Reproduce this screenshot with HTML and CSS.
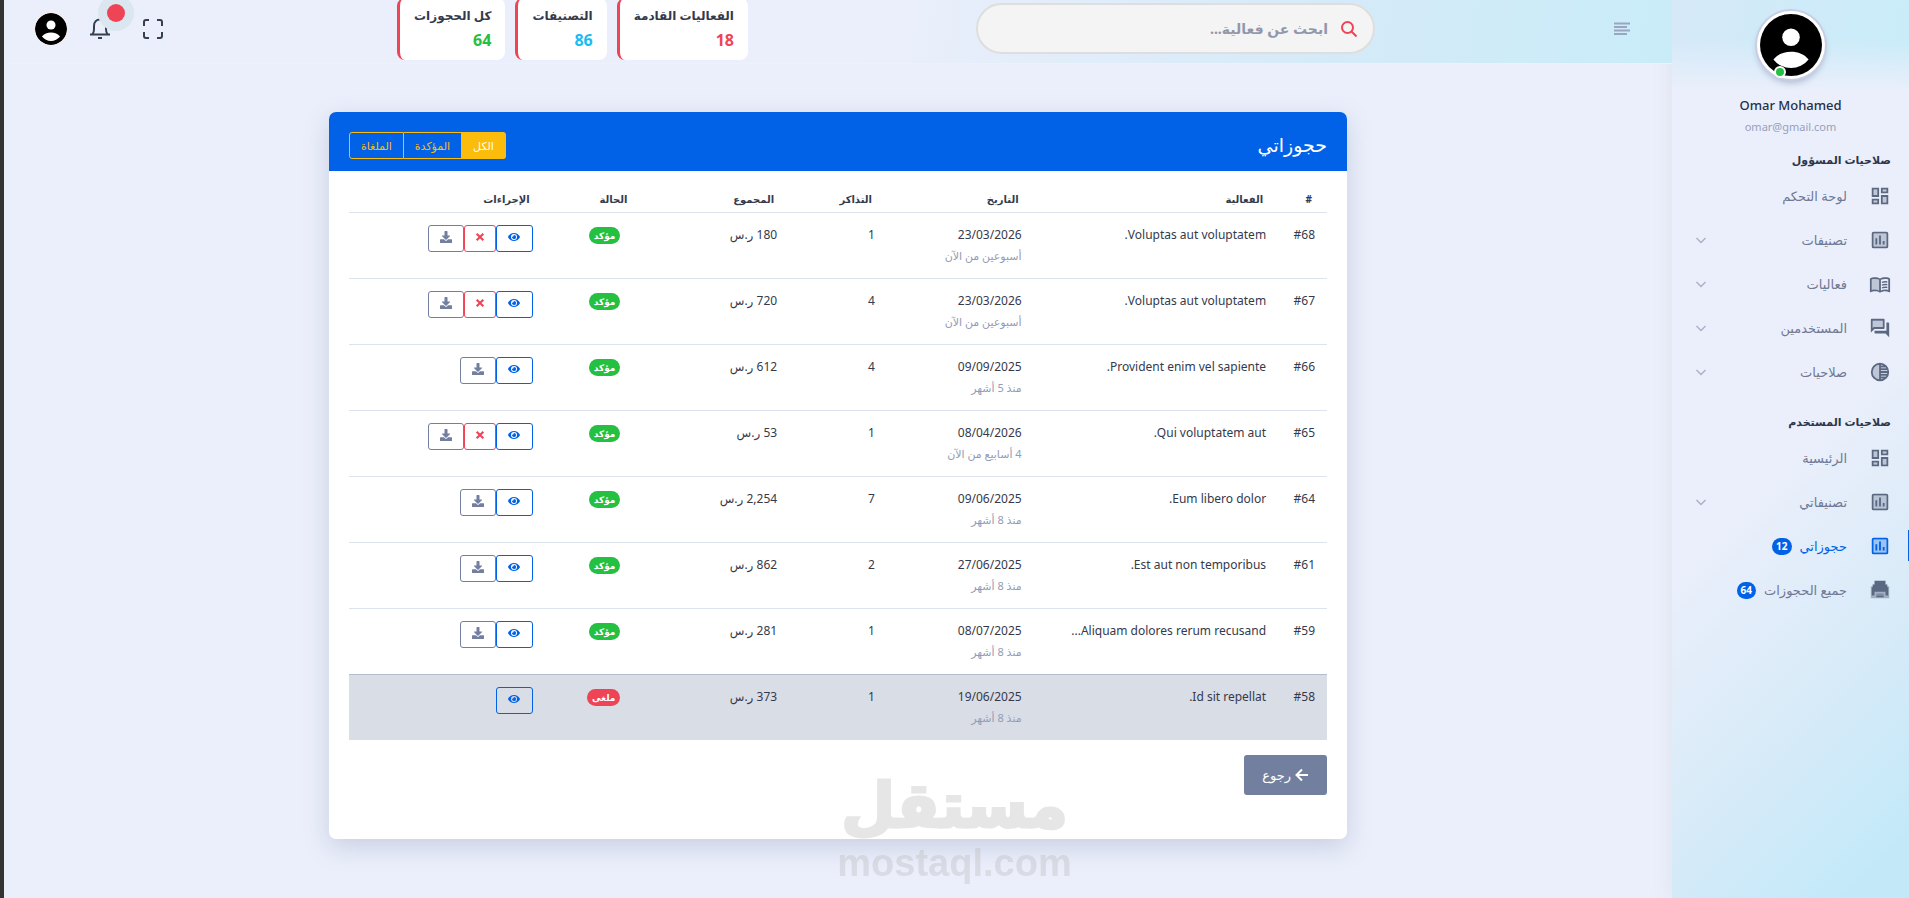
FILE: index.html
```
<!DOCTYPE html>
<html lang="ar" dir="rtl">
<head>
    <meta charset="UTF-8">
    <meta name="viewport" content="width=device-width, initial-scale=1.0">
    <title>حجوزاتي</title>
    <link rel="stylesheet" href="styles.css">
</head>
<body>
    <!-- shared icons -->
    <svg class="sprite" aria-hidden="true">
        <symbol id="i-dash" viewBox="0 0 24 24">
            <path d="M5 5h4v6H5zm10 8h4v6h-4zM5 17h4v2H5zM15 5h4v2h-4z" opacity=".3"/>
            <path d="M3 13h8V3H3v10zm2-8h4v6H5V5zm8 16h8V11h-8v10zm2-8h4v6h-4v-6zM13 3v6h8V3h-8zm6 4h-4V5h4v2zM3 21h8v-6H3v6zm2-4h4v2H5v-2z"/>
        </symbol>
        <symbol id="i-chart" viewBox="0 0 24 24">
            <path d="M5 19h14V5H5v14z" opacity=".3"/>
            <path d="M19 3H5a2 2 0 0 0-2 2v14a2 2 0 0 0 2 2h14a2 2 0 0 0 2-2V5a2 2 0 0 0-2-2zm0 16H5V5h14v14zM7 10h2v7H7zm4-3h2v10h-2zm4 6h2v4h-2z"/>
        </symbol>
        <symbol id="i-book" viewBox="0 0 24 24">
            <path d="M3 18.500V7c1.100-.35 2.300-.5 3.500-.5 1.340 0 3.130.41 4.500.99v11.500C9.630 18.410 7.840 18 6.500 18c-1.200 0-2.400.15-3.500.5z" opacity=".3"/>
            <path d="M21 5c-1.110-.35-2.330-.5-3.500-.5-1.950 0-4.050.4-5.500 1.500-1.450-1.100-3.550-1.500-5.500-1.500S2.450 4.900 1 6v14.650c0 .25.25.5.5.5.1 0 .15-.05.25-.05C3.100 20.450 5.050 20 6.500 20c1.950 0 4.050.4 5.500 1.500 1.350-.85 3.800-1.500 5.500-1.500 1.650 0 3.350.3 4.750 1.050.1.05.15.05.25.05.25 0 .5-.25.5-.5V6c-.6-.45-1.250-.75-2-1zM3 18.500V7c1.100-.35 2.300-.5 3.500-.5 1.340 0 3.130.41 4.500.99v11.500C9.630 18.410 7.840 18 6.500 18c-1.200 0-2.400.15-3.500.5zm18 0c-1.100-.35-2.300-.5-3.500-.5-1.340 0-3.130.41-4.500.99V7.490c1.370-.59 3.160-.99 4.500-.99 1.200 0 2.400.15 3.500.5v11.500zM14 9.500c2-.9 4-.9 6-.5v1.500c-2-.4-4-.4-6 .5zm0 3c2-.9 4-.9 6-.5v1.500c-2-.4-4-.4-6 .5zm0 3c2-.9 4-.9 6-.5v1.500c-2-.4-4-.4-6 .5z"/>
        </symbol>
        <symbol id="i-chat" viewBox="0 0 24 24">
            <path d="M15 11V4H4v8l1-1h10z" opacity=".3"/>
            <path d="M16 13a1 1 0 0 0 1-1V3a1 1 0 0 0-1-1H3a1 1 0 0 0-1 1v14l4-4h10zM4 4h11v7H5l-1 1V4zm17 2h-2v9H6v2a1 1 0 0 0 1 1h11l4 4V7a1 1 0 0 0-1-1z"/>
        </symbol>
        <symbol id="i-tone" viewBox="0 0 24 24">
            <path d="M4 12c0 4 3 7.500 7 7.930V4.070C7 4.500 4 8 4 12z" opacity=".3"/>
            <path d="M12 2a10 10 0 1 0 0 20 10 10 0 0 0 0-20zm-1 17.930A8 8 0 0 1 11 4.070v15.860zM13 4.070c1 .13 2 .45 2.870.93H13v-.93zM13 7h5.240c.25.310.48.65.68 1H13V7zm0 3h6.740c.8.330.15.660.19 1H13v-1zm0 9.930V19h2.870c-.87.480-1.840.8-2.870.93zM18.240 17H13v-1h5.920c-.2.350-.43.690-.68 1zm1.500-3H13v-1h6.930c-.4.340-.11.670-.19 1z"/>
        </symbol>
        <symbol id="i-print" viewBox="0 0 24 24">
            <path d="M2 8h20v13H2z" opacity=".45"/>
            <path d="M6 2h12v4h2v3h1v9h-3v-4H6v4H3V9h1V6h2zm2 14h8v1H8zm0 2h8v2H8z"/>
        </symbol>
        <symbol id="i-down" viewBox="0 0 24 24">
            <path d="m3 8 9 9 9-9" fill="none" stroke="currentColor" stroke-width="3"/>
        </symbol>
        <symbol id="i-user" viewBox="0 0 24 24">
            <circle cx="12" cy="12" r="12" fill="#000"/>
            <circle cx="12" cy="9" r="3.400" fill="#fff"/>
            <path d="M5.200 17.600c1.600-2 4-3 6.800-3s5.200 1 6.800 3a8.600 8.600 0 0 1-13.600 0z" fill="#fff"/>
        </symbol>
        <symbol id="i-eye" viewBox="0 0 576 512">
            <path d="M573 241C518 136 411 64 288 64S58 136 3 241a32 32 0 0 0 0 30c55 105 162 177 285 177s230-72 285-177a32 32 0 0 0 0-30zM288 400a144 144 0 1 1 0-288 144 144 0 0 1 0 288zm0-240a95 95 0 0 0-25 4 48 48 0 0 1-67 67 96 96 0 1 0 92-71z"/>
        </symbol>
        <symbol id="i-x" viewBox="0 0 24 24">
            <path d="m4 4 16 16M20 4 4 20" stroke="currentColor" stroke-width="5"/>
        </symbol>
        <symbol id="i-save" viewBox="0 0 512 512">
            <path d="M216 0h80c13 0 24 11 24 24v168h88c18 0 27 21 14 34L270 378a20 20 0 0 1-28 0L90 226c-13-13-4-34 14-34h88V24c0-13 11-24 24-24zm296 376v112c0 13-11 24-24 24H24c-13 0-24-11-24-24V376c0-13 11-24 24-24h147l49 49c20 20 52 20 72 0l49-49h147c13 0 24 11 24 24z"/>
        </symbol>
    </svg>

    <div class="app">
        <aside class="sidebar">
            <div class="profile">
                <div class="photo">
                    <svg><use href="#i-user"/></svg>
                    <span class="online"></span>
                </div>
                <h4>Omar Mohamed</h4>
                <span class="email">omar@gmail.com</span>
            </div>

            <nav>
                <h5>صلاحيات المسؤول</h5>
                <a href="#"><svg class="icon"><use href="#i-dash"/></svg><span>لوحة التحكم</span></a>
                <a href="#"><svg class="icon"><use href="#i-chart"/></svg><span>تصنيفات</span><svg class="arrow"><use href="#i-down"/></svg></a>
                <a href="#"><svg class="icon"><use href="#i-book"/></svg><span>فعاليات</span><svg class="arrow"><use href="#i-down"/></svg></a>
                <a href="#"><svg class="icon"><use href="#i-chat"/></svg><span>المستخدمين</span><svg class="arrow"><use href="#i-down"/></svg></a>
                <a href="#"><svg class="icon"><use href="#i-tone"/></svg><span>صلاحيات</span><svg class="arrow"><use href="#i-down"/></svg></a>

                <h5>صلاحيات المستخدم</h5>
                <a href="#"><svg class="icon"><use href="#i-dash"/></svg><span>الرئيسية</span></a>
                <a href="#"><svg class="icon"><use href="#i-chart"/></svg><span>تصنيفاتي</span><svg class="arrow"><use href="#i-down"/></svg></a>
                <a href="#" class="active"><svg class="icon"><use href="#i-chart"/></svg><span>حجوزاتي</span><b class="count">12</b></a>
                <a href="#"><svg class="icon"><use href="#i-print"/></svg><span>جميع الحجوزات</span><b class="count">64</b></a>
            </nav>
        </aside>

        <div class="main">
            <header class="topbar">
                <button class="tool" aria-label="القائمة">
                    <svg class="menu" viewBox="0 0 16 14"><path d="M0 1.500h16M0 5h13M0 8.500h16M0 12h13" stroke="currentColor" stroke-width="2"/></svg>
                </button>
                <form class="search">
                    <label for="search" aria-label="بحث">
                        <svg viewBox="0 0 16 16"><circle cx="6.500" cy="6.500" r="5.500"/><path d="m10.500 10.500 5 5"/></svg>
                    </label>
                    <input type="text" id="search" placeholder="ابحث عن فعالية...">
                </form>
                <div class="stats">
                    <div class="stat"><h6>الفعاليات القادمة</h6><strong class="red">18</strong></div>
                    <div class="stat"><h6>التصنيفات</h6><strong class="cyan">86</strong></div>
                    <div class="stat"><h6>كل الحجوزات</h6><strong class="green">64</strong></div>
                </div>
                <div class="tools">
                    <button class="tool" aria-label="ملء الشاشة">
                        <svg class="full" viewBox="0 0 20 20"><path d="M1 7V3a2 2 0 0 1 2-2h3M14 1h3a2 2 0 0 1 2 2v4M19 13v4a2 2 0 0 1-2 2h-3M6 19H3a2 2 0 0 1-2-2v-4"/></svg>
                    </button>
                    <button class="tool bell" aria-label="الإشعارات">
                        <svg viewBox="0 0 22 22"><path d="M1 16.500h20M3.500 16c1-1 1.500-2.500 1.500-5V8c0-4 2.500-6.500 6-6.500S17 4 17 8v3c0 2.500.5 4 1.500 5"/><path d="M9 20h4"/></svg>
                        <span class="pulse"></span>
                    </button>
                    <button class="tool" aria-label="الحساب">
                        <svg class="me"><use href="#i-user"/></svg>
                    </button>
                </div>
            </header>

            <main>
                <section class="card">
                    <div class="card-header">
                        <h3>حجوزاتي</h3>
                        <div class="filters">
                            <button class="on">الكل</button>
                            <button>المؤكدة</button>
                            <button>الملغاة</button>
                        </div>
                    </div>
                    <div class="card-body">
                        <table>
                            <thead>
                                <tr>
                                    <th class="w5">#</th>
                                    <th class="w25">الفعالية</th>
                                    <th class="w15">التاريخ</th>
                                    <th class="w10">التذاكر</th>
                                    <th class="w15">المجموع</th>
                                    <th class="w10">الحالة</th>
                                    <th class="w20">الإجراءات</th>
                                </tr>
                            </thead>
                            <tbody id="rows"></tbody>
                        </table>
                        <a href="#" class="back">
                            <svg viewBox="0 0 14 14"><path d="M13 7H2M7 1.500 1.500 7 7 12.500"/></svg>
                            رجوع
                        </a>
                    </div>
                </section>
            </main>
        </div>
    </div>

    <div class="watermark">
        <span class="wm-ar">مستقل</span>
        <span class="wm-en" dir="ltr">mostaql.com</span>
    </div>

    <script>
        const bookings = [
            { id: 68, event: "Voluptas aut voluptatem.", date: "23/03/2026", ago: "أسبوعين من الآن", tickets: 1, total: "180", actions: ["eye", "x", "save"] },
            { id: 67, event: "Voluptas aut voluptatem.", date: "23/03/2026", ago: "أسبوعين من الآن", tickets: 4, total: "720", actions: ["eye", "x", "save"] },
            { id: 66, event: "Provident enim vel sapiente.", date: "09/09/2025", ago: "منذ 5 أشهر", tickets: 4, total: "612", actions: ["eye", "save"] },
            { id: 65, event: "Qui voluptatem aut.", date: "08/04/2026", ago: "4 أسابيع من الآن", tickets: 1, total: "53", actions: ["eye", "x", "save"] },
            { id: 64, event: "Eum libero dolor.", date: "09/06/2025", ago: "منذ 8 أشهر", tickets: 7, total: "2,254", actions: ["eye", "save"] },
            { id: 61, event: "Est aut non temporibus.", date: "27/06/2025", ago: "منذ 8 أشهر", tickets: 2, total: "862", actions: ["eye", "save"] },
            { id: 59, event: "Aliquam dolores rerum recusand...", date: "08/07/2025", ago: "منذ 8 أشهر", tickets: 1, total: "281", actions: ["eye", "save"] },
            { id: 58, event: "Id sit repellat.", date: "19/06/2025", ago: "منذ 8 أشهر", tickets: 1, total: "373", actions: ["eye"], cancelled: true }
        ];
        const labels = { eye: "عرض", x: "إلغاء", save: "تحميل" };

        document.getElementById("rows").innerHTML = bookings.map(b => `
            <tr class="${b.cancelled ? "cancelled" : ""}">
                <td><bdo dir="ltr">#${b.id}</bdo></td>
                <td>${b.event}</td>
                <td>${b.date}<small>${b.ago}</small></td>
                <td>${b.tickets}</td>
                <td>${b.total} ر.س</td>
                <td><span class="badge">${b.cancelled ? "ملغى" : "مؤكد"}</span></td>
                <td><div class="actions">${b.actions.map(a => `<button class="act-${a}" aria-label="${labels[a]}"><svg><use href="#i-${a}"/></svg></button>`).join("")}</div></td>
            </tr>`).join("");
    </script>
</body>
</html>
```
FILE: styles.css
```
* {
    box-sizing: border-box;
}
body {
    margin: 0;
    font-family: "Noto Sans", "DejaVu Sans", sans-serif;
    font-size: 13px;
    color: #343a4c;
    background: #ebeffb;
    border-left: 4px solid #333;
}
h3, h4, h5, h6 {
    margin: 0;
}
button {
    font-family: inherit;
    cursor: pointer;
}
svg {
    fill: currentColor;
    flex-shrink: 0;
}
.sprite {
    display: none;
}
.app {
    display: flex;
    min-height: 100vh;
}

/* sidebar */
.sidebar {
    flex: 0 0 237px;
    background:
        linear-gradient(to bottom, rgba(235, 239, 251, 0) 40px, #ebeffb 92px) top / 100% 92px no-repeat,
        linear-gradient(100deg, #d6e9f8, #c9ecf8) top / 100% 92px no-repeat,
        linear-gradient(135deg, #ebeffb 50%, #d6eaf8 76%, #c3e9f9 94%);
    box-shadow: 0 0 18px rgba(150, 160, 150, 0.15);
}
.profile {
    display: flex;
    flex-direction: column;
    align-items: center;
    padding-top: 11px;
}
.photo {
    position: relative;
    width: 68px;
    height: 68px;
    border: 3px solid #fff;
    border-radius: 50%;
    background: #fff;
    box-shadow: 0 0 0 2px #c8cfe4, 0 4px 6px rgba(100, 110, 150, 0.4);
}
.photo svg {
    display: block;
    width: 62px;
    height: 62px;
}
.online {
    position: absolute;
    bottom: -2px;
    left: 14px;
    width: 12px;
    height: 12px;
    border: 2px solid #fff;
    border-radius: 50%;
    background: #24c041;
}
.profile h4 {
    margin-top: 16px;
    font-size: 13px;
    font-weight: 500;
    line-height: 20px;
    color: #242f48;
}
.email {
    margin-top: 4px;
    font-size: 11px;
    line-height: 16px;
    color: #97a0bb;
}
nav h5 {
    padding: 0 18px;
    margin: 17px 0 3px;
    font-size: 11px;
    line-height: 22px;
    color: #2c364c;
}
nav h5:first-child {
    margin-top: 14px;
}
nav a {
    position: relative;
    display: flex;
    align-items: center;
    height: 44px;
    padding: 0 18px;
    color: #6f7894;
    font-size: 13px;
    text-decoration: none;
}
nav .icon {
    width: 22px;
    height: 22px;
    margin-left: 22px;
    color: #5b6882;
}
nav .arrow {
    width: 12px;
    height: 12px;
    margin-right: auto;
    margin-left: 5px;
    color: #a8b1c7;
}
nav .active, nav .active .icon {
    color: #0162e8;
}
nav .active::before {
    content: "";
    position: absolute;
    top: 6px;
    right: 0;
    width: 1px;
    height: 31px;
    background: #0162e8;
}
.count {
    padding: 0 4px;
    margin-right: 8px;
    border-radius: 9px;
    background: #0162e8;
    color: #fff;
    font-size: 10px;
    line-height: 17px;
}

/* top bar */
.main {
    flex: 1;
    min-width: 0;
}
.topbar {
    display: flex;
    align-items: center;
    height: 64px;
    padding: 0 42px 6px 30px;
    border-bottom: 1px solid #f8eef2;
    background: linear-gradient(100deg, #ebeffb 52%, #d6eaf8 78%, #c9ecf8);
}
.tool {
    position: relative;
    display: flex;
    padding: 0;
    border: 0;
    background: none;
    color: #34404f;
}
.menu {
    width: 16px;
    height: 14px;
    color: #9aa6bf;
}
.search {
    display: flex;
    align-items: center;
    width: 399px;
    height: 51px;
    margin-right: 239px;
    padding: 0 16px;
    border: 2px solid #dedede;
    border-radius: 26px;
    background: #f4f4f4;
}
.search svg {
    display: block;
    width: 16px;
    height: 16px;
    fill: none;
    stroke: #ee4455;
    stroke-width: 2;
}
.search input {
    flex: 1;
    min-width: 0;
    padding: 0 13px;
    border: 0;
    outline: 0;
    background: none;
    font-family: inherit;
    font-size: 14px;
    font-weight: bold;
}
.search input::placeholder {
    color: #9297ac;
    opacity: 1;
}
.stats {
    display: flex;
    gap: 10px;
    margin-right: 228px;
}
.stat {
    height: 62px;
    padding: 8px 14px 6px;
    border-left: 3px solid #ee4455;
    border-radius: 8px;
    background: #fff;
    white-space: nowrap;
}
.stat h6 {
    font-size: 12px;
    line-height: 20px;
}
.stat strong {
    font-size: 16px;
    line-height: 28px;
}
.red {
    color: #ee4455;
}
.cyan {
    color: #19bcf1;
}
.green {
    color: #24c041;
}
.tools {
    display: flex;
    align-items: center;
    gap: 21px;
    margin-right: auto;
}
.full, .bell svg {
    width: 20px;
    height: 20px;
    fill: none;
    stroke: currentColor;
    stroke-width: 2;
}
.bell {
    margin-right: 11px;
}
.bell svg {
    width: 22px;
    height: 22px;
}
.pulse {
    position: absolute;
    top: -14px;
    left: 18px;
    width: 18px;
    height: 18px;
    border-radius: 50%;
    background: #ee4455;
    box-shadow: 0 0 0 9px #dbe7f0;
}
.me {
    width: 34px;
    height: 34px;
    border: 1px solid #fbecea;
    border-radius: 50%;
}

/* bookings card */
main {
    padding: 48px 20px;
}
.card {
    max-width: 1018px;
    margin: 0 auto;
    border-radius: 7px;
    background: #fff;
    box-shadow: 0 8px 24px rgba(100, 115, 160, 0.25);
}
.card-header {
    display: flex;
    align-items: flex-end;
    justify-content: space-between;
    padding: 20px 20px 12px;
    border-radius: 7px 7px 0 0;
    background: #0162e8;
    color: #fff;
}
.card-header h3 {
    font-size: 19px;
    font-weight: 400;
    line-height: 27px;
}
.filters {
    display: flex;
}
.filters button {
    height: 27px;
    padding: 0 11px;
    border: 1px solid #fbbc0b;
    border-left-width: 0;
    background: none;
    color: #fbbc0b;
    font-size: 11px;
}
.filters button:first-child {
    border-radius: 0 3px 3px 0;
}
.filters button:last-child {
    border-left-width: 1px;
    border-radius: 3px 0 0 3px;
}
.filters .on {
    background: #fbbc0b;
    color: #fff;
}
.card-body {
    padding: 16px 20px 44px;
}
table {
    width: 100%;
    table-layout: fixed;
    border-collapse: collapse;
}
th {
    padding: 0 15px;
    height: 25px;
    font-size: 10px;
    text-align: right;
}
td {
    height: 66px;
    padding: 11px 12px 0;
    border-top: 1px solid #dde2ef;
    font-size: 12px;
    line-height: 22px;
    vertical-align: top;
    white-space: nowrap;
}
small {
    display: block;
    font-size: 11px;
    line-height: 20px;
    color: #949cb4;
}
.w5 {
    width: 5%;
}
.w10 {
    width: 10%;
}
.w15 {
    width: 15%;
}
.w20 {
    width: 20%;
}
.w25 {
    width: 25%;
}
.badge {
    display: block;
    width: fit-content;
    padding: 0 5px;
    margin: 3px 10px 0;
    border-radius: 9px;
    background: #24c041;
    color: #fff;
    font-size: 9px;
    font-weight: bold;
    line-height: 17px;
}
.cancelled td {
    background: #d9dde6;
    border-top-color: #b4bdcf;
}
.cancelled .badge {
    background: #ee4455;
}
.actions {
    display: flex;
    margin-top: 1px;
}
.actions button {
    display: flex;
    align-items: center;
    justify-content: center;
    width: 37px;
    height: 27px;
    padding: 0 0 2px;
    border: 1px solid #0162e8;
    border-radius: 3px;
    background: none;
    color: #0162e8;
}
.actions svg {
    width: 12px;
    height: 12px;
}
.actions .act-x {
    width: 32px;
    border-color: #ee4455;
    color: #ee4455;
}
.actions .act-x svg {
    width: 10px;
    height: 10px;
}
.actions .act-save {
    width: 36px;
    border-color: #737f9e;
    color: #737f9e;
}
.back {
    display: inline-flex;
    align-items: center;
    gap: 4px;
    height: 40px;
    padding: 0 18px;
    margin-top: 15px;
    border-radius: 3px;
    background: #737f9e;
    color: #fff;
    text-decoration: none;
}
.back svg {
    width: 14px;
    height: 14px;
    fill: none;
    stroke: currentColor;
    stroke-width: 2;
}

/* watermark over the page */
.watermark {
    position: fixed;
    left: 50%;
    bottom: 15px;
    display: flex;
    flex-direction: column;
    align-items: center;
    transform: translateX(-50%);
    color: #bbb;
    opacity: 0.36;
    font-weight: bold;
    pointer-events: none;
}
.wm-ar {
    font-size: 62px;
    line-height: 80px;
    -webkit-text-stroke: 3px #bbb;
}
.wm-en {
    font-family: "Liberation Sans", sans-serif;
    font-size: 38px;
    line-height: 40px;
}
```
